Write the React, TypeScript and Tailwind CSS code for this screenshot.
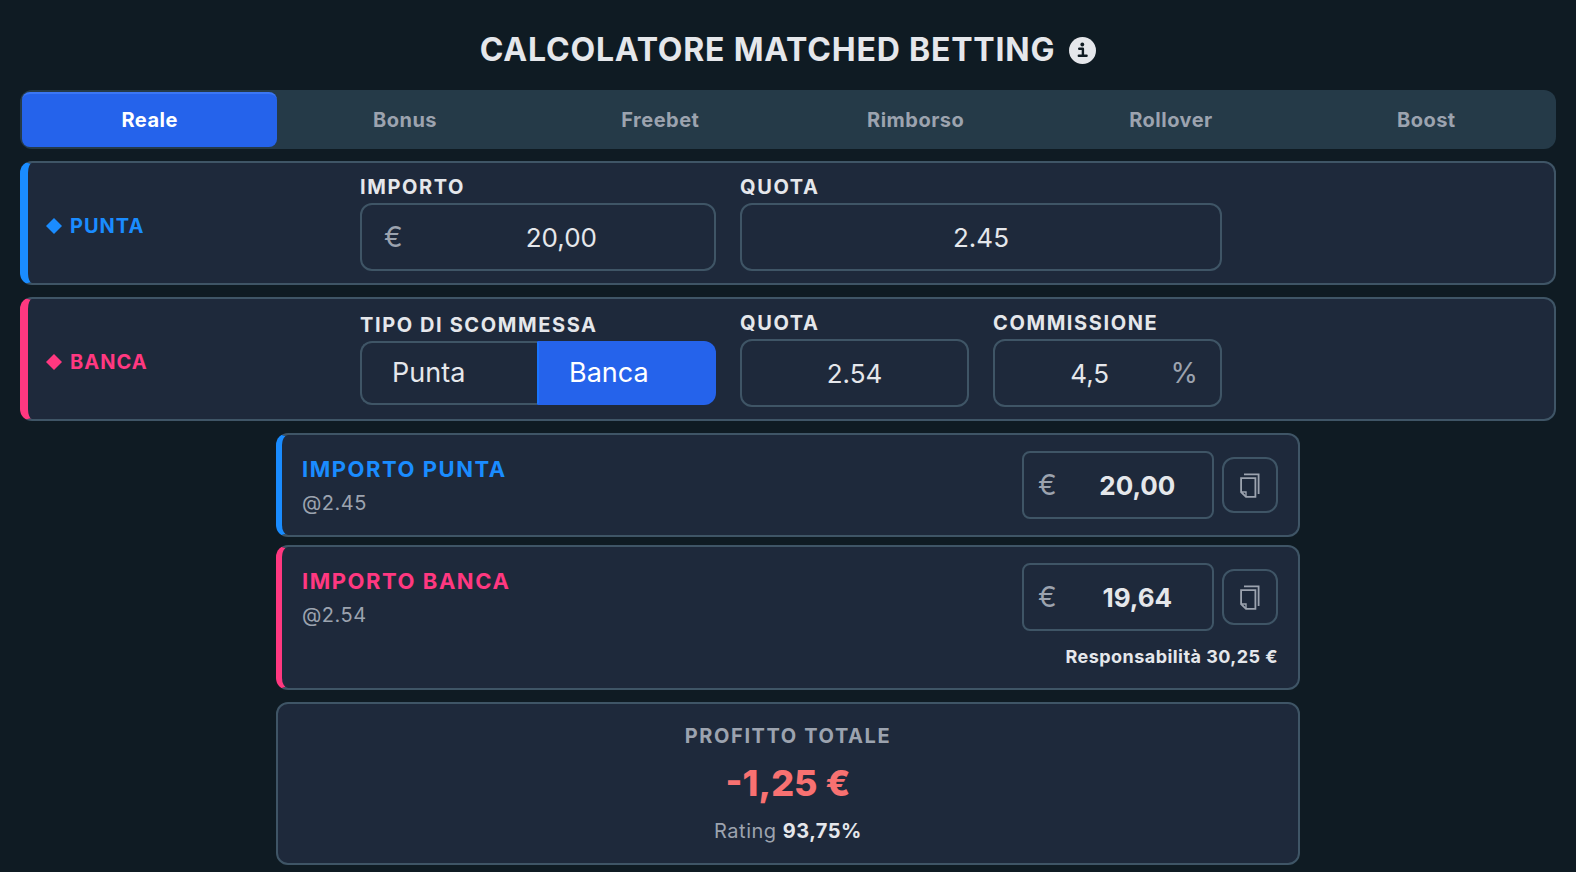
import { useState } from "react";
import type { ReactNode } from "react";

const TABS = ["Reale", "Bonus", "Freebet", "Rimborso", "Rollover", "Boost"];

const CARD = "rounded-xl border-2 border-[#3f5566] bg-[#1e293b]";
const ROW =
  "grid grid-cols-[290fr_356fr_229fr_229fr_292fr] items-center gap-6 border-l-8 py-3 pl-[18px] pr-4";
const FIELD = "flex h-[68px] items-center rounded-xl border-2 border-[#3f5566] px-[22px]";
const AFFIX = "text-[28px] text-[#9ca3af]";
const LABEL = "block text-xl leading-6 font-bold tracking-[0.08em] uppercase";

function InfoIcon() {
  return (
    <svg width="27" height="27" viewBox="0 0 27 27" aria-hidden="true">
      <circle cx="13.5" cy="13.5" r="13.5" fill="#e5e7eb" />
      <circle cx="13.3" cy="7.5" r="1.9" fill="#101b23" />
      <path d="M10.2 11.8H13.9V18.8M9.8 18.8H17.6" fill="none" stroke="#101b23" strokeWidth="2.4" strokeLinecap="round" strokeLinejoin="round" />
    </svg>
  );
}

function CopyIcon() {
  return (
    <svg width="20" height="25" viewBox="0 0 20 25" fill="none" stroke="currentColor" strokeWidth="1.8" aria-hidden="true">
      <path d="M4 1.4H18.6V21" />
      <path d="M1.1 5.2H15.4V23.8H6L1.1 19Z" />
      <path d="M1.1 19H6V23.8" strokeWidth="1.4" />
    </svg>
  );
}

function Side({ name, color }: { name: string; color: string }) {
  return (
    <h2 className={`flex items-center gap-2 pt-1.5 text-xl leading-6 font-bold tracking-wider ${color}`}>
      <svg width="16" height="16" viewBox="0 0 16 16" fill="currentColor" aria-hidden="true">
        <path d="M8 0L16 8L8 16L0 8Z" />
      </svg>
      {name}
    </h2>
  );
}

function Field({ id, label, value, prefix, suffix }: {
  id: string;
  label: string;
  value: string;
  prefix?: string;
  suffix?: string;
}) {
  return (
    <div className="min-w-0">
      <label htmlFor={id} className={LABEL}>{label}</label>
      <div className={`${FIELD} mt-1 ${prefix ? "gap-7" : "gap-2"}`}>
        {prefix && <span className={AFFIX}>{prefix}</span>}
        <input id={id} defaultValue={value} inputMode="decimal" className="w-full min-w-0 flex-1 bg-transparent text-center text-[26px] outline-none" />
        {suffix && <span className={AFFIX}>{suffix}</span>}
      </div>
    </div>
  );
}

function Result({ id, title, odds, value, accent, children }: {
  id: string;
  title: string;
  odds: string;
  value: string;
  accent: string;
  children?: ReactNode;
}) {
  return (
    <section className={`${CARD} ${accent} border-l-[6px] px-5 py-4`}>
      <div className="flex items-start justify-between">
        <div>
          <label htmlFor={id} className="block text-[22px] leading-9 font-bold tracking-[0.07em]">{title}</label>
          <p className="text-xl leading-8 tracking-wide text-[#9ca3af]">{odds}</p>
        </div>
        <div className="flex items-center gap-2">
          <div className="flex h-[68px] w-48 items-center gap-5 rounded-lg border-2 border-[#3f5566] px-[14px]">
            <span className={AFFIX}>€</span>
            <input id={id} readOnly value={value} className="w-full min-w-0 flex-1 bg-transparent text-center text-[26px] font-bold text-[#e5e7eb] outline-none" />
          </div>
          <button type="button" aria-label="Copia" className="flex size-14 items-center justify-center rounded-xl border-2 border-[#3f5566] text-[#9ca3af]">
            <CopyIcon />
          </button>
        </div>
      </div>
      {children}
    </section>
  );
}

export default function App() {
  const [tab, setTab] = useState("Reale");
  const [side, setSide] = useState("Banca");
  return (
    <main className="min-h-screen bg-[#0f1b23] px-5 pt-7 pb-[7px] font-['Inter',sans-serif] text-[#e5e7eb]">
      <header className="flex items-center justify-center gap-3.5 pb-[18px]">
        <h1 className="text-[32px] leading-[44px] font-bold tracking-wide">CALCOLATORE MATCHED BETTING</h1>
        <button type="button" aria-label="Informazioni">
          <InfoIcon />
        </button>
      </header>

      <nav className="flex rounded-xl bg-[#253a48] p-0.5">
        {TABS.map((t) => (
          <button
            key={t}
            type="button"
            onClick={() => setTab(t)}
            className={`h-[55px] flex-1 rounded-lg text-xl font-bold tracking-wide ${
              t === tab ? "border-t-2 border-[#3b77f5] bg-[#2563eb] pb-0.5 text-white" : "text-[#9ca3af]"
            }`}
          >
            {t}
          </button>
        ))}
      </nav>

      <section className={`${CARD} ${ROW} mt-3 border-l-[#1a8cff]`}>
        <Side name="PUNTA" color="text-[#1a8cff]" />
        <Field id="importo" label="Importo" value="20,00" prefix="€" />
        <div className="col-span-2">
          <Field id="quota-punta" label="Quota" value="2.45" />
        </div>
      </section>

      <section className={`${CARD} ${ROW} mt-3 border-l-[#ff3880]`}>
        <Side name="BANCA" color="text-[#ff3880]" />
        <div role="group" aria-labelledby="tipo">
          <span id="tipo" className={LABEL}>Tipo di scommessa</span>
          <div className="mt-1 flex h-16 text-[27px]">
            {["Punta", "Banca"].map((s) => (
              <button
                key={s}
                type="button"
                aria-pressed={s === side}
                onClick={() => setSide(s)}
                className={`flex-1 border-2 px-[30px] text-left first:rounded-l-xl first:border-r-0 last:rounded-r-xl ${
                  s === side
                    ? "border-[#2563eb] border-l-[#1a75ff] bg-[#2563eb] text-white"
                    : "border-[#3f5566]"
                }`}
              >
                {s}
              </button>
            ))}
          </div>
        </div>
        <Field id="quota-banca" label="Quota" value="2.54" />
        <Field id="commissione" label="Commissione" value="4,5" suffix="%" />
      </section>

      <div className="mx-auto mt-3 max-w-5xl">
        <Result id="importo-punta" title="IMPORTO PUNTA" odds="@2.45" value="20,00" accent="border-l-[#1a8cff] [&_label]:text-[#1a8cff]" />
        <div className="mt-2">
          <Result id="importo-banca" title="IMPORTO BANCA" odds="@2.54" value="19,64" accent="border-l-[#ff3880] [&_label]:text-[#ff3880]">
            <p className="mt-3 mb-0.5 text-right text-lg leading-[27px] font-bold tracking-wide">Responsabilità 30,25 €</p>
          </Result>
        </div>
        <section className={`${CARD} mt-3 flex flex-col gap-2 py-5 text-center`}>
          <h2 className="text-xl leading-6 font-bold tracking-[0.08em] text-[#9ca3af]">PROFITTO TOTALE</h2>
          <p className="text-4xl leading-[55px] font-extrabold text-[#f87171]">-1,25 €</p>
          <p className="text-xl leading-6 tracking-wide text-[#9ca3af]">
            Rating <strong className="font-bold text-[#e5e7eb]">93,75%</strong>
          </p>
        </section>
      </div>
    </main>
  );
}
